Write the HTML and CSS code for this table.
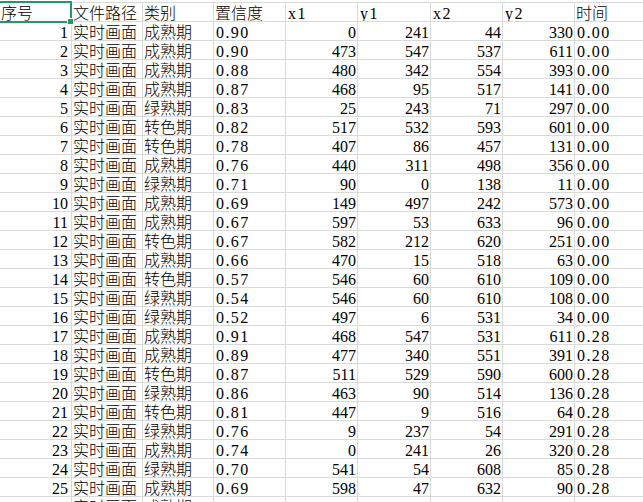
FILE: index.html
```html
<!DOCTYPE html>
<html lang="zh">
<head>
<meta charset="utf-8">
<link rel="stylesheet" href="styles.css">
</head>
<body>
<div class="sheet">
<table class="grid">
<colgroup><col class="ca"><col class="cb"><col class="cc"><col class="cd"><col class="ce"><col class="cf"><col class="cg"><col class="ch"><col class="ci"></colgroup>
<tr class="head"><td class="t cur">序号<div class="sel"><span class="handle"></span></div></td><td class="t">文件路径</td><td class="t">类别</td><td class="t">置信度</td><td class="l">x1</td><td class="l">y1</td><td class="l">x2</td><td class="l">y2</td><td class="t">时间</td></tr>
<tr><td class="n a">1</td><td class="t">实时画面</td><td class="t">成熟期</td><td class="l">0.90</td><td class="n">0</td><td class="n">241</td><td class="n">44</td><td class="n">330</td><td class="l">0.00</td></tr>
<tr><td class="n a">2</td><td class="t">实时画面</td><td class="t">成熟期</td><td class="l">0.90</td><td class="n">473</td><td class="n">547</td><td class="n">537</td><td class="n">611</td><td class="l">0.00</td></tr>
<tr><td class="n a">3</td><td class="t">实时画面</td><td class="t">成熟期</td><td class="l">0.88</td><td class="n">480</td><td class="n">342</td><td class="n">554</td><td class="n">393</td><td class="l">0.00</td></tr>
<tr><td class="n a">4</td><td class="t">实时画面</td><td class="t">成熟期</td><td class="l">0.87</td><td class="n">468</td><td class="n">95</td><td class="n">517</td><td class="n">141</td><td class="l">0.00</td></tr>
<tr><td class="n a">5</td><td class="t">实时画面</td><td class="t">绿熟期</td><td class="l">0.83</td><td class="n">25</td><td class="n">243</td><td class="n">71</td><td class="n">297</td><td class="l">0.00</td></tr>
<tr><td class="n a">6</td><td class="t">实时画面</td><td class="t">转色期</td><td class="l">0.82</td><td class="n">517</td><td class="n">532</td><td class="n">593</td><td class="n">601</td><td class="l">0.00</td></tr>
<tr><td class="n a">7</td><td class="t">实时画面</td><td class="t">转色期</td><td class="l">0.78</td><td class="n">407</td><td class="n">86</td><td class="n">457</td><td class="n">131</td><td class="l">0.00</td></tr>
<tr><td class="n a">8</td><td class="t">实时画面</td><td class="t">成熟期</td><td class="l">0.76</td><td class="n">440</td><td class="n">311</td><td class="n">498</td><td class="n">356</td><td class="l">0.00</td></tr>
<tr><td class="n a">9</td><td class="t">实时画面</td><td class="t">绿熟期</td><td class="l">0.71</td><td class="n">90</td><td class="n">0</td><td class="n">138</td><td class="n">11</td><td class="l">0.00</td></tr>
<tr><td class="n a">10</td><td class="t">实时画面</td><td class="t">成熟期</td><td class="l">0.69</td><td class="n">149</td><td class="n">497</td><td class="n">242</td><td class="n">573</td><td class="l">0.00</td></tr>
<tr><td class="n a">11</td><td class="t">实时画面</td><td class="t">成熟期</td><td class="l">0.67</td><td class="n">597</td><td class="n">53</td><td class="n">633</td><td class="n">96</td><td class="l">0.00</td></tr>
<tr><td class="n a">12</td><td class="t">实时画面</td><td class="t">转色期</td><td class="l">0.67</td><td class="n">582</td><td class="n">212</td><td class="n">620</td><td class="n">251</td><td class="l">0.00</td></tr>
<tr><td class="n a">13</td><td class="t">实时画面</td><td class="t">成熟期</td><td class="l">0.66</td><td class="n">470</td><td class="n">15</td><td class="n">518</td><td class="n">63</td><td class="l">0.00</td></tr>
<tr><td class="n a">14</td><td class="t">实时画面</td><td class="t">转色期</td><td class="l">0.57</td><td class="n">546</td><td class="n">60</td><td class="n">610</td><td class="n">109</td><td class="l">0.00</td></tr>
<tr><td class="n a">15</td><td class="t">实时画面</td><td class="t">绿熟期</td><td class="l">0.54</td><td class="n">546</td><td class="n">60</td><td class="n">610</td><td class="n">108</td><td class="l">0.00</td></tr>
<tr><td class="n a">16</td><td class="t">实时画面</td><td class="t">绿熟期</td><td class="l">0.52</td><td class="n">497</td><td class="n">6</td><td class="n">531</td><td class="n">34</td><td class="l">0.00</td></tr>
<tr><td class="n a">17</td><td class="t">实时画面</td><td class="t">成熟期</td><td class="l">0.91</td><td class="n">468</td><td class="n">547</td><td class="n">531</td><td class="n">611</td><td class="l">0.28</td></tr>
<tr><td class="n a">18</td><td class="t">实时画面</td><td class="t">成熟期</td><td class="l">0.89</td><td class="n">477</td><td class="n">340</td><td class="n">551</td><td class="n">391</td><td class="l">0.28</td></tr>
<tr><td class="n a">19</td><td class="t">实时画面</td><td class="t">转色期</td><td class="l">0.87</td><td class="n">511</td><td class="n">529</td><td class="n">590</td><td class="n">600</td><td class="l">0.28</td></tr>
<tr><td class="n a">20</td><td class="t">实时画面</td><td class="t">绿熟期</td><td class="l">0.86</td><td class="n">463</td><td class="n">90</td><td class="n">514</td><td class="n">136</td><td class="l">0.28</td></tr>
<tr><td class="n a">21</td><td class="t">实时画面</td><td class="t">转色期</td><td class="l">0.81</td><td class="n">447</td><td class="n">9</td><td class="n">516</td><td class="n">64</td><td class="l">0.28</td></tr>
<tr><td class="n a">22</td><td class="t">实时画面</td><td class="t">绿熟期</td><td class="l">0.76</td><td class="n">9</td><td class="n">237</td><td class="n">54</td><td class="n">291</td><td class="l">0.28</td></tr>
<tr><td class="n a">23</td><td class="t">实时画面</td><td class="t">成熟期</td><td class="l">0.74</td><td class="n">0</td><td class="n">241</td><td class="n">26</td><td class="n">320</td><td class="l">0.28</td></tr>
<tr><td class="n a">24</td><td class="t">实时画面</td><td class="t">绿熟期</td><td class="l">0.70</td><td class="n">541</td><td class="n">54</td><td class="n">608</td><td class="n">85</td><td class="l">0.28</td></tr>
<tr><td class="n a">25</td><td class="t">实时画面</td><td class="t">成熟期</td><td class="l">0.69</td><td class="n">598</td><td class="n">47</td><td class="n">632</td><td class="n">90</td><td class="l">0.28</td></tr>
<tr><td class="n a"></td><td class="t">实时画面</td><td class="t">成熟期</td><td class="l"></td><td class="n"></td><td class="n"></td><td class="n"></td><td class="n"></td><td class="l"></td></tr>
</table>
</div>
</body>
</html>
```
FILE: styles.css
```css
html, body {
  margin: 0;
  padding: 0;
  background: #fff;
  overflow: hidden;
}
body {
  width: 643px;
  height: 502px;
}
.sheet {
  width: 643px;
  height: 502px;
  overflow: hidden;
  padding-top: 2px;
  box-sizing: border-box;
}
.grid {
  border-collapse: separate;
  border-spacing: 0;
  table-layout: fixed;
  width: 652px;
  border-top: 1px solid #dadada;
  font-family: "Liberation Serif", "Noto Sans CJK SC", serif;
  font-size: 16px;
  color: #000;
}
.ca { width: 72px; }
.cb { width: 71px; }
.cc { width: 71px; }
.cd { width: 72px; }
.ce { width: 72px; }
.cf { width: 73px; }
.cg { width: 72px; }
.ch { width: 72px; }
.ci { width: 77px; }
.grid td {
  height: 15px;
  padding: 3px 0 0 0;
  line-height: 15px;
  border-right: 1px solid #dadada;
  border-bottom: 1px solid #dadada;
  white-space: nowrap;
  overflow: hidden;
  vertical-align: top;
}
.grid td.t {
  font-family: "Noto Sans CJK SC", sans-serif;
  font-weight: 300;
  padding: 0 0 0 1px;
  height: 18px;
  line-height: 18px;
}
.grid td.n {
  text-align: right;
  padding-right: 1px;
}
.grid td.n.a {
  padding-right: 3px;
}
.grid td.l {
  text-align: left;
  padding-left: 2px;
  letter-spacing: 1.4px;
}
.grid td.cur {
  position: relative;
  overflow: visible;
}
.sel {
  position: absolute;
  left: -3px;
  top: -2px;
  width: 75px;
  height: 22px;
  box-sizing: border-box;
  border: 2px solid #1f9b6a;
  z-index: 2;
}
.handle {
  position: absolute;
  right: -4px;
  bottom: -4px;
  width: 5px;
  height: 5px;
  background: #1f9b6a;
  border: 1px solid #fff;
}
```
